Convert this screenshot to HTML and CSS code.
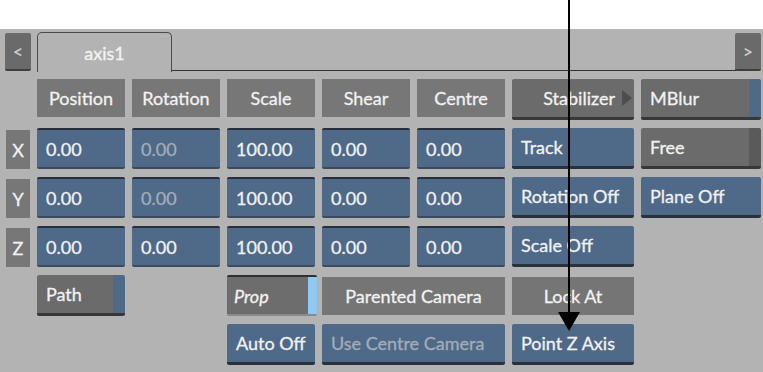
FILE: index.html
```html
<!DOCTYPE html>
<html lang="en">
<head>
    <meta charset="UTF-8">
    <title>Axis Menu</title>
    <link rel="stylesheet" href="styles.css">
</head>
<body>

<div class="panel">
    <div class="tabbar">
        <div class="nav-btn">&lt;</div>
        <div class="tab">axis1</div>
        <div class="tab-fill"></div>
        <div class="nav-btn right">&gt;</div>
    </div>

    <div class="grid">
        <!-- header row -->
        <div class="head c2">Position</div>
        <div class="head">Rotation</div>
        <div class="head">Scale</div>
        <div class="head">Shear</div>
        <div class="head">Centre</div>
        <div class="btn gray stab">Stabilizer<span class="tri"></span></div>
        <div class="btn gray strip-blue">MBlur</div>

        <!-- X -->
        <div class="axis">X</div>
        <div class="field">0.00</div>
        <div class="field dim">0.00</div>
        <div class="field">100.00</div>
        <div class="field">0.00</div>
        <div class="field">0.00</div>
        <div class="btn blue">Track</div>
        <div class="btn gray strip-dark">Free</div>

        <!-- Y -->
        <div class="axis">Y</div>
        <div class="field">0.00</div>
        <div class="field dim">0.00</div>
        <div class="field">100.00</div>
        <div class="field">0.00</div>
        <div class="field">0.00</div>
        <div class="btn blue">Rotation Off</div>
        <div class="btn blue">Plane Off</div>

        <!-- Z -->
        <div class="axis">Z</div>
        <div class="field">0.00</div>
        <div class="field">0.00</div>
        <div class="field">100.00</div>
        <div class="field">0.00</div>
        <div class="field">0.00</div>
        <div class="btn blue c7">Scale Off</div>

        <!-- bottom rows -->
        <div class="btn gray strip-blue c2 r5">Path</div>
        <div class="btn prop c4 r5">Prop</div>
        <div class="flat c5 span2 r5">Parented Camera</div>
        <div class="flat c7 r5">Lock At</div>

        <div class="btn blue c4 r6">Auto Off</div>
        <div class="btn blue dim c5 span2 r6">Use Centre Camera</div>
        <div class="btn blue c7 r6">Point Z Axis</div>
    </div>
</div>

<svg class="pointer" width="763" height="372" viewBox="0 0 763 372">
    <line x1="569" y1="0" x2="569" y2="316" stroke="#000" stroke-width="2"/>
    <polygon points="558,312 580,312 569,331" fill="#000"/>
</svg>

</body>
</html>
```

FILE: styles.css
```css
body {
    margin: 0;
    background: #fff;
    font-family: Lato, "Open Sans", sans-serif;
    font-size: 18px;
    color: #f2f2f2;
    -webkit-text-stroke: 0.3px currentColor;
    position: relative;
    width: 763px;
    height: 372px;
    overflow: hidden;
}
.panel {
    margin-top: 29px;
    height: 343px;
    background: #b3b3b3;
}
.tabbar {
    display: flex;
    align-items: flex-end;
    height: 43px;
    padding: 0 2px 0 5px;
}
.nav-btn {
    width: 26px;
    height: 36px;
    margin-bottom: 1px;
    background: #6a6a6a;
    border-bottom: 2px solid #3e3e3e;
    border-radius: 2px;
    color: #d0d0d0;
    font-size: 17px;
    display: flex;
    align-items: center;
    justify-content: center;
}
.nav-btn.right {
    margin-left: -1px;
}
.tab {
    width: 133px;
    height: 39px;
    margin-left: 6px;
    border: 1px solid #4a4a4a;
    border-bottom: none;
    border-radius: 5px 5px 0 0;
    display: flex;
    align-items: center;
    justify-content: center;
    color: #f4f4f4;
}
.tab-fill {
    flex: 1;
    align-self: stretch;
    border-bottom: 1px solid #333;
    margin-bottom: 1px;
}
.grid {
    display: grid;
    grid-template-columns: 24px repeat(5, 88px) 122px 120px;
    grid-template-rows: repeat(6, 41px);
    column-gap: 7px;
    row-gap: 8px;
    padding: 7px 2px 0 6px;
}
.c2 { grid-column: 2; }
.c4 { grid-column: 4; }
.c5 { grid-column: 5; }
.c7 { grid-column: 7; }
.span2 { grid-column-end: span 2; }
.r5 { grid-row: 5; }
.r6 { grid-row: 6; }

.head, .axis, .flat {
    background: #777;
    display: flex;
    align-items: center;
    justify-content: center;
}
.head {
    height: 38px;
}
.axis {
    grid-column: 1;
    align-self: end;
    height: 39px;
}
.flat {
    align-self: center;
    height: 38px;
    background: #757575;
}
.field, .btn {
    display: flex;
    align-items: center;
    padding-left: 9px;
    border-radius: 2px;
    box-sizing: border-box;
    position: relative;
}
.field {
    background: #4f6988;
    border-top: 2px solid #26303c;
    border-bottom: 2px solid #3b4a5c;
}
.field.dim, .btn.dim {
    color: #a3adb9;
}
.btn.blue {
    background: #4f6988;
    border-bottom: 3px solid #28313d;
}
.btn.gray {
    background: #6b6b6b;
    border-bottom: 3px solid #383838;
}
.strip-blue {
    background: linear-gradient(to left, #4f6988 12px, #6b6b6b 12px) !important;
}
.strip-dark {
    background: linear-gradient(to left, #5a5a5a 12px, #6b6b6b 12px) !important;
}
.btn.prop {
    background: linear-gradient(to left, #8ec9f2 9px, #6d6d6d 9px);
    border-top: 2px solid #303030;
    border-bottom: 2px solid #8a8a8a;
    font-style: italic;
    padding-left: 7px;
    width: 90px;
}
.btn.stab {
    justify-content: flex-end;
    padding-right: 2px;
}
.tri {
    width: 0;
    height: 0;
    margin-left: 7px;
    border-top: 8px solid transparent;
    border-bottom: 8px solid transparent;
    border-left: 10px solid #4e4e4e;
}
.pointer {
    position: absolute;
    left: 0;
    top: 0;
}
```
